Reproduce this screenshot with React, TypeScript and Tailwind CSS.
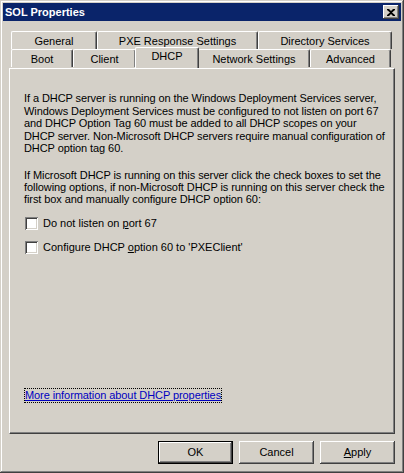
import React, { useState } from "react";

const font = { fontFamily: '"Liberation Sans", Arial, sans-serif' };

type Tab = { label: string; w: string };

const backRow: Tab[] = [
  { label: "General", w: "w-[86px]" },
  { label: "PXE Response Settings", w: "w-[161px]" },
  { label: "Directory Services", w: "w-[134px]" },
];

const frontRow: Tab[] = [
  { label: "Boot", w: "w-[62px]" },
  { label: "Client", w: "w-[63px]" },
  { label: "DHCP", w: "w-[64px]" },
  { label: "Network Settings", w: "w-[112px]" },
  { label: "Advanced", w: "w-[81px]" },
];

function TabButton({ tab, selected }: { tab: Tab; selected?: boolean }) {
  if (selected) {
    return (
      <div
        className={`${tab.w} relative z-10 -mx-[1px] -mt-[2px] h-[21px] rounded-tl-[2px] rounded-tr-[2px] border-l border-t border-r border-l-white border-t-white border-r-[#404040] bg-[#d4d0c8] pt-[2px] text-center shadow-[inset_-1px_0_#808080]`}
      >
        {tab.label}
      </div>
    );
  }
  return (
    <div
      className={`${tab.w} h-[18px] rounded-tl-[2px] rounded-tr-[2px] border-l border-t border-r border-l-white border-t-white border-r-[#404040] pt-[3px] text-center shadow-[inset_-1px_0_#808080]`}
    >
      {tab.label}
    </div>
  );
}

function Checkbox({ label, checked, onToggle }: { label: React.ReactNode; checked: boolean; onToggle: () => void }) {
  return (
    <div className="flex h-[13px] items-center gap-[5px]" onClick={onToggle}>
      <div className="flex h-[13px] w-[13px] items-center justify-center bg-white shadow-[inset_1px_1px_#808080,inset_-1px_-1px_#fff,inset_2px_2px_#404040,inset_-2px_-2px_#d4d0c8]">
        {checked && (
          <svg width="7" height="7" viewBox="0 0 7 7">
            <path d="M0 2 L2 4 L6 0 L6 2 L2 6 L0 4 Z" fill="#000" />
          </svg>
        )}
      </div>
      <span>{label}</span>
    </div>
  );
}

function Button({ children, isDefault }: { children: React.ReactNode; isDefault?: boolean }) {
  return (
    <div
      className={`flex h-[23px] w-[75px] items-center justify-center bg-[#d4d0c8] ${
        isDefault
          ? "border border-black shadow-[inset_-1px_-1px_#404040,inset_1px_1px_#fff,inset_-2px_-2px_#808080]"
          : "shadow-[inset_-1px_-1px_#404040,inset_1px_1px_#fff,inset_-2px_-2px_#808080]"
      }`}
    >
      {children}
    </div>
  );
}

export default function App() {
  const [noListen, setNoListen] = useState(false);
  const [option60, setOption60] = useState(false);

  return (
    <div
      style={font}
      className="flex h-[473px] w-[404px] flex-col bg-[#d4d0c8] p-[3px] text-[11px] leading-[13px] text-black shadow-[inset_-1px_-1px_#404040,inset_1px_1px_#d4d0c8,inset_-2px_-2px_#808080,inset_2px_2px_#fff]"
    >
      {/* title bar */}
      <div className="flex h-[18px] items-center justify-between bg-[#0a246a] pl-[2px] pr-[2px]">
        <span className="text-[11px] font-bold text-white">SOL Properties</span>
        <div className="flex h-[14px] w-[16px] items-center justify-center bg-[#d4d0c8] shadow-[inset_-1px_-1px_#404040,inset_1px_1px_#fff,inset_-2px_-2px_#808080]">
          <svg width="8" height="7" viewBox="0 0 8 7">
            <path d="M0 0h2l2 2 2-2h2v1L5 3.5 8 6v1H6L4 5 2 7H0V6l3-2.5L0 1z" fill="#000" />
          </svg>
        </div>
      </div>

      <div className="flex flex-1 flex-col px-[6px] pt-[10px]">
        {/* tabs */}
        <div className="flex flex-col pl-[2px]">
          <div className="flex">
            {backRow.map((t) => (
              <TabButton key={t.label} tab={t} />
            ))}
          </div>
          <div className="flex">
            {frontRow.map((t) => (
              <TabButton key={t.label} tab={t} selected={t.label === "DHCP"} />
            ))}
          </div>
        </div>

        {/* panel */}
        <div className="flex h-[366px] w-[386px] flex-col border-l border-t border-r border-b border-l-white border-t-white border-r-[#404040] border-b-[#404040] px-[14px] pt-[23px] shadow-[inset_-1px_-1px_#808080]">
          <p className="whitespace-nowrap leading-[12.5px] tracking-[-0.08px]">
            If a DHCP server is running on the Windows Deployment Services server,
            <br />
            Windows Deployment Services must be configured to not listen on port 67
            <br />
            and DHCP Option Tag 60 must be added to all DHCP scopes on your
            <br />
            DHCP server. Non-Microsoft DHCP servers require manual configuration of
            <br />
            DHCP option tag 60.
          </p>
          <p className="mt-[14px] whitespace-nowrap leading-[12.25px] tracking-[-0.08px]">
            If Microsoft DHCP is running on this server click the check boxes to set the
            <br />
            following options, if non-Microsoft DHCP is running on this server check the
            <br />
            first box and manually configure DHCP option 60:
          </p>

          <div className="mt-[12px] flex flex-col gap-[11px] pl-[1px]">
            <Checkbox
              checked={noListen}
              onToggle={() => setNoListen((v) => !v)}
              label={
                <>
                  Do not listen on <span className="underline">p</span>ort 67
                </>
              }
            />
            <Checkbox
              checked={option60}
              onToggle={() => setOption60((v) => !v)}
              label={
                <>
                  Configure DHCP <span className="underline">o</span>ption 60 to 'PXEClient'
                </>
              }
            />
          </div>

          <div className="mt-auto mb-[30px]">
            <span className="inline-block border border-dotted border-[#000] tracking-[-0.08px] text-[#0000c0] underline">
              More information about DHCP properties
            </span>
          </div>
        </div>

        {/* buttons */}
        <div className="mt-[7px] flex justify-end gap-[6px]">
          <Button isDefault>OK</Button>
          <Button>Cancel</Button>
          <Button>
            <span>
              <span className="underline">A</span>pply
            </span>
          </Button>
        </div>
      </div>
    </div>
  );
}
